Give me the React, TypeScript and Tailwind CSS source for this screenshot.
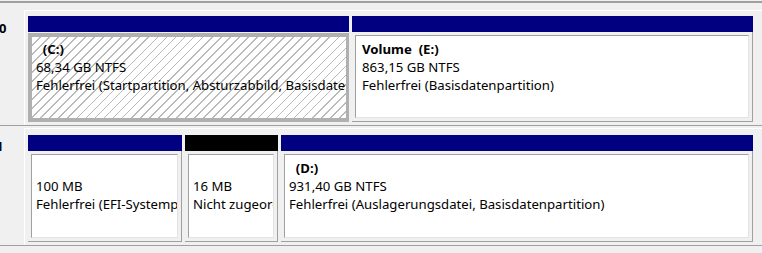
import React from "react"

type PartProps = {
  className: string
  bar: string
  label?: string
  size: string
  status: string
  selected?: boolean
  textPad?: string
}

const Partition = ({ className, bar, label, size, status, selected, textPad = "pl-[4px]" }: PartProps) => {
  const text = (
    <div className={`overflow-hidden whitespace-pre pt-[4px] text-[13.2px] leading-[18px] text-black ${textPad}`}>
      <div className="h-[18px] font-bold">{label ?? ""}</div>
      <div>{size}</div>
      <div>{status}</div>
    </div>
  )
  return (
    <div className={`flex shrink-0 flex-col ${className}`}>
      <div className={`h-[16px] shrink-0 ${bar}`} />
      {selected ? (
        <div className="mt-[1px] flex-1 bg-[#b0b0b0] p-[4px] pr-[3px]">
          <div className="h-full overflow-hidden bg-[repeating-linear-gradient(135deg,#ffffff_0px,#ffffff_5.2px,#b9b9b9_5.2px,#b9b9b9_6.4px)] [&>div]:pt-[3px] [&>div]:pl-[4px]">
            {text}
          </div>
        </div>
      ) : (
        <div className="flex-1 border-r border-b border-[#a0a0a0] bg-[#f0f0f0] px-[3px] pt-[3px] pb-[3px]">
          <div className="h-full overflow-hidden border border-t-[#a0a0a0] border-l-[#a0a0a0] border-r-[#e3e3e3] border-b-[#e3e3e3] bg-white">
            {text}
          </div>
        </div>
      )}
    </div>
  )
}

export default function App() {
  return (
    <div className="relative h-[253px] w-[762px] overflow-hidden bg-[#f0f0f0] font-['Noto_Sans',sans-serif]">
      <div className="mt-[1px] h-[2px] bg-[#a0a0a0]" />
      <div className="h-[7px]" />

      {/* Datenträger 0 */}
      <div className="flex h-[116px] border-b border-[#a0a0a0]">
        <div className="w-[25px] shrink-0 overflow-hidden border-r border-white pt-[9px] text-[13px] leading-[18px] font-bold text-black">
          <span className="ml-[-1px]">0</span>
        </div>
        <div className="flex flex-1 gap-[3px] border-t border-white pt-[5px] pb-[3px] pl-[3px] pr-[8px]">
          <Partition
            className="w-[321px]"
            bar="bg-[#000080]"
            label="  (C:)"
            size="68,34 GB NTFS"
            status="Fehlerfrei (Startpartition, Absturzabbild, Basisdatenpartition)"
            selected
          />
          <Partition
            className="w-[401px]"
            bar="bg-[#000080]"
            label="Volume  (E:)"
            size="863,15 GB NTFS"
            status="Fehlerfrei (Basisdatenpartition)"
            textPad="pl-[6px]"
          />
        </div>
      </div>

      <div className="h-[2px]" />

      {/* Datenträger 1 */}
      <div className="flex h-[118px] border-b border-[#a0a0a0]">
        <div className="w-[25px] shrink-0 overflow-hidden border-r border-white pt-[9px] text-[13px] leading-[18px] font-bold text-black">
          <span className="ml-[-4px]">1</span>
        </div>
        <div className="flex flex-1 gap-[3px] border-t border-white pt-[6px] pb-[3px] pl-[3px] pr-[8px]">
          <Partition
            className="w-[154px]"
            bar="bg-[#000080]"
            size="100 MB"
            status="Fehlerfrei (EFI-Systempartition)"
          />
          <Partition
            className="w-[93px]"
            bar="bg-black"
            size="16 MB"
            status="Nicht zugeordnet"
          />
          <Partition
            className="w-[472px]"
            bar="bg-[#000080]"
            label="  (D:)"
            size="931,40 GB NTFS"
            status="Fehlerfrei (Auslagerungsdatei, Basisdatenpartition)"
          />
        </div>
      </div>
    </div>
  )
}
